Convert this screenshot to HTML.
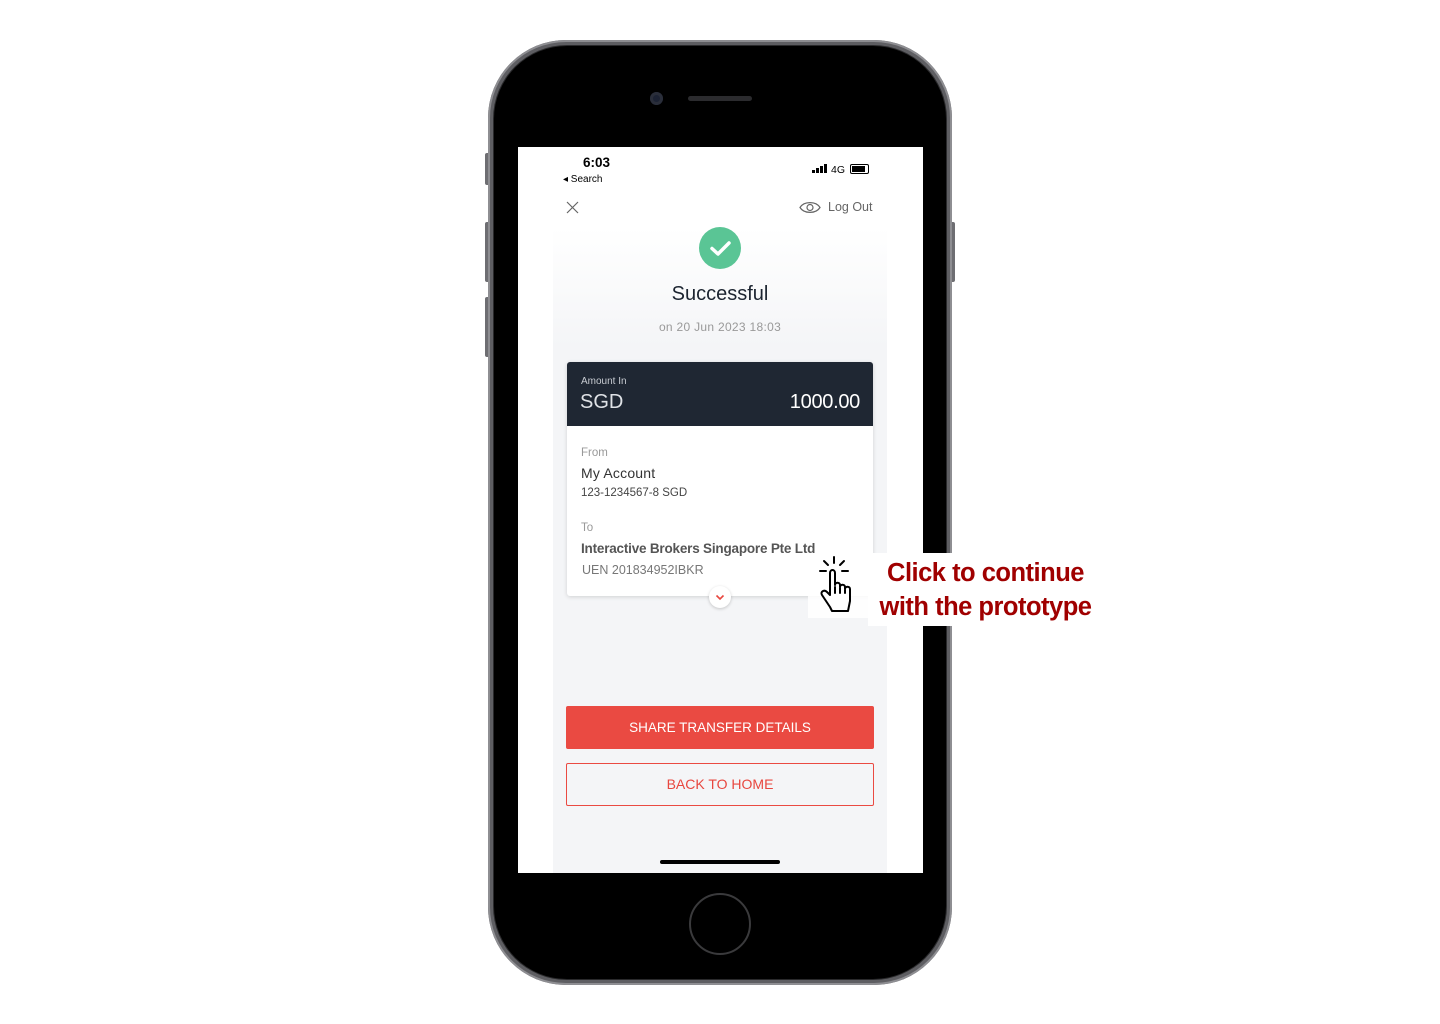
<!DOCTYPE html>
<html><head><meta charset="utf-8"><style>
*{box-sizing:border-box;margin:0;padding:0}
body{width:1440px;height:1024px;background:#fff;position:relative;overflow:hidden;font-family:"Liberation Sans",sans-serif}
.abs{position:absolute}
.phone{left:488px;top:40px;width:464px;height:945px;border-radius:78px;background:#5e5e62;box-shadow:inset 0 0 0 2px #8e8e92}
.bezel{left:494px;top:46px;width:452px;height:933px;border-radius:73px;background:#000;box-shadow:0 0 0 1px #2a2a2c}
.btn{background:#6e6e72;border-radius:2px}
.screen{left:518px;top:147px;width:405px;height:726px;background:#fff;overflow:hidden}
.app{left:35px;top:0;width:334px;height:726px;background:linear-gradient(#fff 0,#fff 80px,#f4f5f7 200px,#f4f5f7)}
</style></head><body>
<div class="abs btn" style="left:485px;top:153px;width:5px;height:32px"></div>
<div class="abs btn" style="left:485px;top:222px;width:5px;height:60px"></div>
<div class="abs btn" style="left:485px;top:297px;width:5px;height:60px"></div>
<div class="abs btn" style="left:950px;top:222px;width:5px;height:60px"></div>
<div class="abs phone"></div>
<div class="abs bezel"></div>
<div class="abs" style="left:650px;top:92px;width:13px;height:13px;border-radius:50%;background:#1c2233;box-shadow:inset 0 0 0 3px #2a2e3a"></div>
<div class="abs" style="left:688px;top:96px;width:64px;height:5px;border-radius:3px;background:#2b2b2e"></div>
<div class="abs" style="left:689px;top:893px;width:62px;height:62px;border-radius:50%;border:2px solid #3a3a3c"></div>
<div class="abs screen">
 <div class="abs app">
  <div class="abs" style="left:30px;top:8px;font-size:13.5px;font-weight:bold;color:#000">6:03</div>
  <div class="abs" style="left:10px;top:27px;font-size:10px;color:#000">◂ Search</div>
  <div class="abs" style="left:259px;top:17px;width:16px;height:10px">
   <div class="abs" style="left:0;top:6px;width:2.5px;height:3px;background:#000"></div>
   <div class="abs" style="left:4px;top:4px;width:2.5px;height:5px;background:#000"></div>
   <div class="abs" style="left:8px;top:2px;width:2.5px;height:7px;background:#000"></div>
   <div class="abs" style="left:12px;top:0;width:2.5px;height:9px;background:#000"></div>
  </div>
  <div class="abs" style="left:278px;top:17px;font-size:10.5px;color:#000">4G</div>
  <div class="abs" style="left:297px;top:17px;width:19px;height:10px;border:1px solid #000;border-radius:2px;padding:1px"><div style="width:13px;height:6px;background:#000"></div></div>
  <svg class="abs" style="left:13px;top:54px" width="13" height="13"><path d="M1 1L12 12M12 1L1 12" stroke="#666" stroke-width="1.2"/></svg>
  <svg class="abs" style="left:246px;top:54px" width="22" height="13"><path d="M1 6.5C5 0 17 0 21 6.5C17 13 5 13 1 6.5Z" fill="none" stroke="#666" stroke-width="1.2"/><circle cx="11" cy="6.5" r="3" fill="none" stroke="#666" stroke-width="1.2"/></svg>
  <div class="abs" style="left:275px;top:53px;font-size:12.5px;color:#666">Log Out</div>
  <div class="abs" style="left:146px;top:80px;width:42px;height:42px;border-radius:50%;background:#5ac595"></div>
  <svg class="abs" style="left:146px;top:80px" width="42" height="42"><path d="M13 21.5L19 27L30 16" fill="none" stroke="#fff" stroke-width="3.5" stroke-linecap="round" stroke-linejoin="round"/></svg>
  <div class="abs" style="left:0;width:334px;top:136px;text-align:center;font-size:20px;color:#1c2430">Successful</div>
  <div class="abs" style="left:0;width:334px;top:173px;text-align:center;font-size:12px;color:#999;letter-spacing:.3px">on 20 Jun 2023 18:03</div>
  <div class="abs" style="left:14px;top:215px;width:306px;height:234px;background:#fff;border-radius:3px;box-shadow:0 1px 4px rgba(0,0,0,.15)"></div>
  <div class="abs" style="left:14px;top:215px;width:306px;height:64px;background:#1f2733;border-radius:3px 3px 0 0"></div>
  <div class="abs" style="left:28px;top:229px;font-size:10px;color:#c8ccd2">Amount In</div>
  <div class="abs" style="left:27px;top:244px;font-size:20px;color:#dfe2e6">SGD</div>
  <div class="abs" style="right:27px;top:244px;font-size:20px;color:#fff;letter-spacing:-.3px">1000.00</div>
  <div class="abs" style="left:28px;top:300px;font-size:11.5px;color:#999">From</div>
  <div class="abs" style="left:28px;top:318px;font-size:14px;color:#333;letter-spacing:.2px">My Account</div>
  <div class="abs" style="left:28px;top:340px;font-size:11.5px;color:#444">123-1234567-8 SGD</div>
  <div class="abs" style="left:28px;top:375px;font-size:11.5px;color:#999">To</div>
  <div class="abs" style="left:28px;top:394px;font-size:13.5px;color:#555;font-weight:bold;letter-spacing:-.2px">Interactive Brokers Singapore Pte Ltd</div>
  <div class="abs" style="left:29px;top:416px;font-size:12.5px;color:#777">UEN 201834952IBKR</div>
  <div class="abs" style="left:156px;top:439px;width:22px;height:22px;border-radius:50%;background:#fff;box-shadow:0 1px 3px rgba(0,0,0,.2)"></div>
  <svg class="abs" style="left:156px;top:439px" width="22" height="22"><path d="M7.5 9.5L11 13L14.5 9.5" fill="none" stroke="#e8473f" stroke-width="1.6"/></svg>
  <div class="abs" style="left:13px;top:559px;width:308px;height:43px;background:#ea4a42;border-radius:2px;color:#fff;font-size:13.5px;text-align:center;line-height:43px">SHARE TRANSFER DETAILS</div>
  <div class="abs" style="left:13px;top:616px;width:308px;height:43px;border:1px solid #ea4a42;border-radius:2px;color:#e8473f;font-size:14px;text-align:center;line-height:41px">BACK TO HOME</div>
  <div class="abs" style="left:107px;top:713px;width:120px;height:4px;border-radius:2px;background:#000"></div>
 </div>
</div>
<div class="abs" style="left:808px;top:553px;width:62px;height:65px;background:rgba(255,255,255,.85)"></div>
<svg class="abs" style="left:812px;top:555px" width="50" height="60"><g fill="none" stroke="#000" stroke-width="2" stroke-linecap="round" stroke-linejoin="round"><path d="M22 2V8M12 6L16 10M32 6L28 10M8 16H14M30 16H36"/><path d="M18 52L10 40C8 37 12 34 15 37L18 40V18C18 14 23 14 23 18V30C23 27 28 27 28 30V32C28 29 33 29 33 32V34C33 31 38 31 38 34V46L36 56H20Z" fill="#fff"/><path d="M23 32V38M28 33V38M33 35V38"/></g></svg>
<div class="abs" style="left:868px;top:553px;width:240px;height:73px;background:#fff"></div>
<div class="abs" style="left:868px;top:556px;width:235px;text-align:center;font-size:25.5px;font-weight:bold;color:#a00000;line-height:34px;letter-spacing:-0.5px">Click to continue<br>with the prototype</div>
</body></html>
